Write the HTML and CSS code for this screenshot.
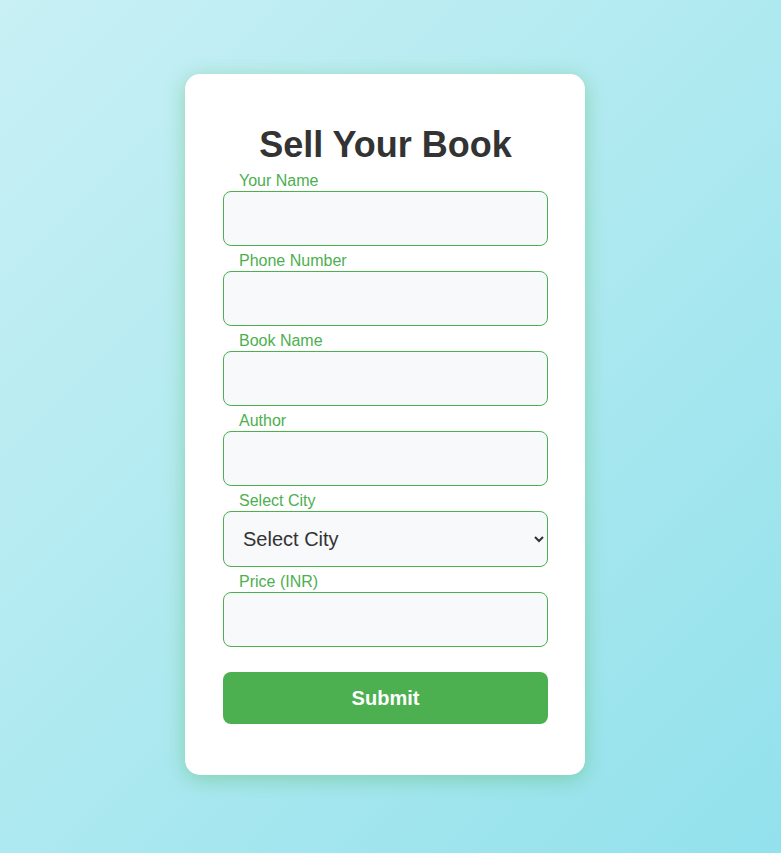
FILE: index.html
```html
<!DOCTYPE html>
<html lang="en">
<head>
<meta charset="utf-8">
<title>Sell Your Book</title>
<link rel="stylesheet" href="styles.css">
</head>
<body>
<div class="card">
  <h2 class="title">Sell Your Book</h2>
  <form class="form">
    <label class="label">Your Name</label>
    <input class="field" type="text">
    <label class="label">Phone Number</label>
    <input class="field" type="text">
    <label class="label">Book Name</label>
    <input class="field" type="text">
    <label class="label">Author</label>
    <input class="field" type="text">
    <label class="label">Select City</label>
    <select class="field select">
      <option>Select City</option>
    </select>
    <label class="label">Price (INR)</label>
    <input class="field" type="text">
    <button class="submit" type="button">Submit</button>
  </form>
</div>
</body>
</html>
```

FILE: styles.css
```css
html, body {
  margin: 0;
  height: 100%;
}
body {
  font-family: "Liberation Sans", Arial, sans-serif;
  background: linear-gradient(135deg, #c8f0f5 0%, #aee9f0 50%, #92e1ec 100%);
  padding: 74px 0 0 185px;
  box-sizing: border-box;
}
.card {
  width: 400px;
  box-sizing: border-box;
  background: #fff;
  border-radius: 15px;
  padding: 50px 37px 51px 38px;
  box-shadow: 0 4px 20px rgba(76, 175, 80, 0.4);
}
.title {
  margin: 0 0 6px;
  text-align: center;
  font-size: 36px;
  font-weight: bold;
  color: #333;
  line-height: 41px;
}
.form {
  display: flex;
  flex-direction: column;
}
.label {
  display: block;
  color: #4caf50;
  font-size: 16px;
  line-height: 18px;
  padding: 1px 0 0 16px;
  margin-bottom: 1px;
}
.field {
  box-sizing: border-box;
  width: 325px;
  height: 55px;
  margin: 0 0 5px;
  padding: 15px 20px;
  font-family: "Liberation Sans", Arial, sans-serif;
  font-size: 20px;
  color: #333;
  background: #f8f9fa;
  border: 1px solid #4caf50;
  border-radius: 8px;
  outline: none;
}
.select {
  height: 56px;
  padding: 0 10px 0 15px;
}
.submit {
  margin-top: 20px;
  height: 52px;
  width: 325px;
  border: none;
  border-radius: 8px;
  background: #4caf50;
  color: #fff;
  font-family: "Liberation Sans", Arial, sans-serif;
  font-size: 20px;
  font-weight: bold;
}
```
